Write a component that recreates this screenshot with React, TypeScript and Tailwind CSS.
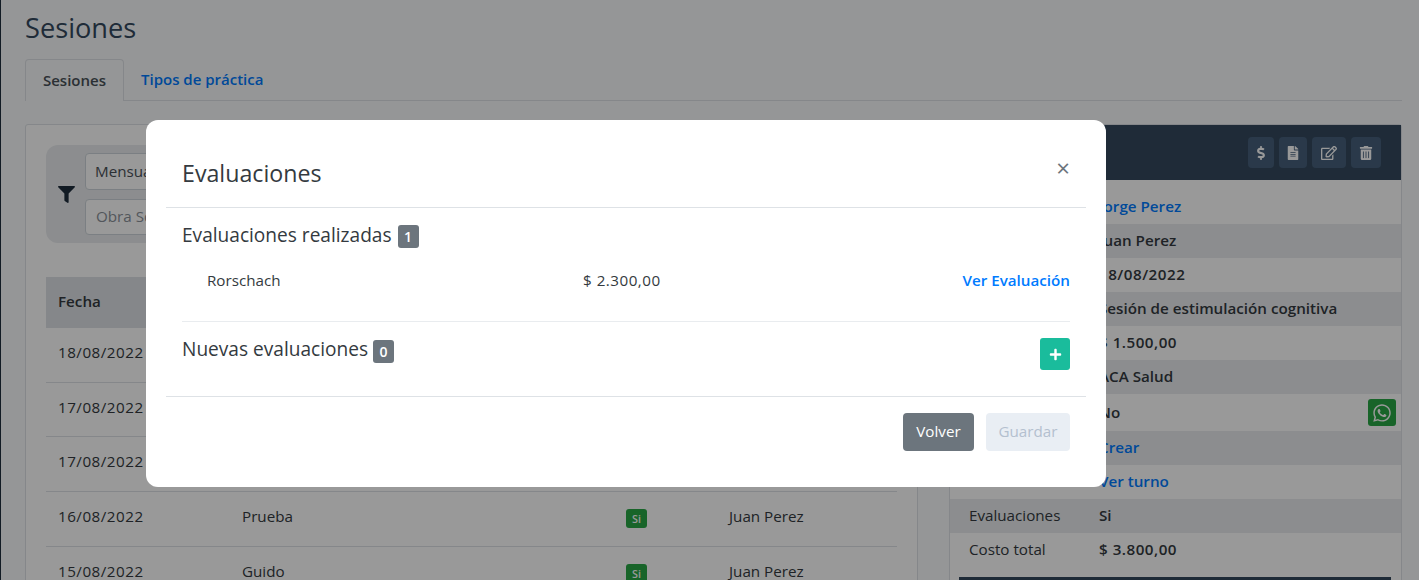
import React from 'react';
import { FaDollarSign, FaFileAlt, FaFilter, FaPlus, FaRegEdit, FaTrashAlt, FaWhatsapp } from 'react-icons/fa';

const sessions = [
  { date: '18/08/2022', name: 'Jorge Perez', paid: 'Si', pro: 'Juan Perez' },
  { date: '17/08/2022', name: 'Guido', paid: 'Si', pro: 'Juan Perez' },
  { date: '17/08/2022', name: 'Prueba', paid: 'Si', pro: 'Juan Perez' },
  { date: '16/08/2022', name: 'Prueba', paid: 'Si', pro: 'Juan Perez' },
  { date: '15/08/2022', name: 'Guido', paid: 'Si', pro: 'Juan Perez' },
];

const details = [
  { label: 'Paciente', value: 'Jorge Perez', link: true },
  { label: 'Profesional', value: 'Juan Perez' },
  { label: 'Fecha', value: '18/08/2022', numeric: true },
  { label: 'Práctica', value: 'Sesión de estimulación cognitiva' },
  { label: 'Costo', value: '$ 1.500,00', numeric: true },
  { label: 'Obra Social', value: 'ACA Salud' },
  { label: 'Recordatorio', value: 'No', whatsapp: true },
  { label: 'Factura', value: 'Crear', link: true },
  { label: 'Turno', value: 'Ver turno', link: true },
  { label: 'Evaluaciones', value: 'Si' },
  { label: 'Costo total', value: '$ 3.800,00', numeric: true },
];

function SessionsTable() {
  return (
    <div className="mt-[34px] text-[15.2px] text-[#343a40]">
      <div className="flex h-[51px] items-center bg-[#dee2e6] pb-[2px] font-semibold">
        <div className="w-[196px] pl-3">Fecha</div>
        <div className="w-[384px]">Paciente</div>
        <div className="w-[103px]">Pago</div>
        <div>Profesional</div>
      </div>
      {sessions.map((s, i) => (
        <div key={i} className="flex h-[54.67px] items-center border-b border-[#dee2e6] pb-[5px]">
          <div className="w-[196px] pl-3 tracking-[0.5px]">{s.date}</div>
          <div className="w-[384px]">{s.name}</div>
          <div className="w-[103px]">
            <span className="relative top-[1px] rounded-[3px] bg-[#28a745] px-[6px] py-[2px] text-[10.8px] font-semibold text-white">{s.paid}</span>
          </div>
          <div>{s.pro}</div>
        </div>
      ))}
    </div>
  );
}

function DetailPanel() {
  return (
    <div className="w-[453px] shrink-0 self-start rounded-[3px] border border-[#dee2e6] bg-white">
      <div className="flex h-[55px] items-center justify-end gap-[5px] bg-[#34495e] pr-[20px] text-white">
        <button className="flex h-[31px] w-[26px] items-center justify-center rounded-[4px] bg-[#46607c]"><FaDollarSign size={14} /></button>
        <button className="flex h-[31px] w-[28px] items-center justify-center rounded-[4px] bg-[#46607c]"><FaFileAlt size={14} /></button>
        <button className="flex h-[31px] w-[34px] items-center justify-center rounded-[4px] bg-[#46607c]"><FaRegEdit size={16} /></button>
        <button className="flex h-[31px] w-[30px] items-center justify-center rounded-[4px] bg-[#46607c]"><FaTrashAlt size={14} /></button>
      </div>
      <div className="pt-[10px] text-[15.2px] text-[#343a40]">
        {details.map((d, i) => (
          <div
            key={d.label}
            className={`flex items-center pl-[19px] ${d.whatsapp ? 'h-[37px]' : 'h-[34px] pb-[2px]'} ${i % 2 === 1 ? 'bg-[#e9ecef]' : ''}`}
          >
            <div className="w-[130px]">{d.label}</div>
            <div className={`flex-1 font-semibold ${d.link ? 'text-[#007bff]' : ''} ${d.numeric ? 'tracking-[0.5px]' : ''}`}>{d.value}</div>
            {d.whatsapp && (
              <button className="mr-[5px] flex h-[27px] w-[28px] items-center justify-center rounded-[3px] bg-[#28a745] text-white">
                <FaWhatsapp size={20} />
              </button>
            )}
          </div>
        ))}
        <div className="mr-[10px] ml-[9px] mt-[10px] h-[40px] bg-[#34495e]" />
      </div>
    </div>
  );
}

function EvaluationsModal() {
  return (
    <div className="fixed inset-0 bg-black/40 pt-[120px] pl-[146px]">
      <div className="h-[367px] w-[960px] rounded-[12px] bg-white px-5 text-[#343a40]">
        <div className="flex h-[88px] items-start justify-between border-b border-[#dee2e6] px-4 pt-[36px]">
          <h5 className="text-[23.2px] leading-[34px] text-[#343a40]">Evaluaciones</h5>
          <button className="mt-[-5px] text-[24px] leading-[34px] text-[#6c757d]">×</button>
        </div>
        <div className="h-[189px] border-b border-[#dee2e6] px-4">
          <div className="flex h-[114px] flex-col border-b border-[#e9ecef]">
            <div className="mt-[14px] flex h-[26px] items-center gap-[6px] text-[19.1px]">
              <span>Evaluaciones realizadas</span>
              <span className="relative top-[1px] flex h-[23px] w-[21px] items-center justify-center rounded-[3px] bg-[#6c757d] text-[14px] font-semibold text-white">1</span>
            </div>
            <div className="mt-[21px] flex items-center text-[15.2px]">
              <span className="w-[401px] pl-[25px]">Rorschach</span>
              <span className="flex-1 tracking-[0.5px]">$ 2.300,00</span>
              <a className="font-semibold text-[#007bff]">Ver Evaluación</a>
            </div>
          </div>
          <div className="flex items-start justify-between pt-4">
            <div className="mt-[-2px] flex h-[26px] items-center gap-[5px] text-[19.1px]">
              <span>Nuevas evaluaciones</span>
              <span className="relative top-[2px] flex h-[23px] w-[21px] items-center justify-center rounded-[3px] bg-[#6c757d] text-[14px] font-semibold text-white">0</span>
            </div>
            <button className="flex h-[32px] w-[30px] items-center justify-center rounded-[3px] bg-[#1abc9c] text-white"><FaPlus size={13} /></button>
          </div>
        </div>
        <div className="flex justify-end gap-3 px-4 pt-4 text-[15.2px]">
          <button className="h-[38px] w-[71px] rounded-[4px] bg-[#6c757d] pb-[1px] text-white">Volver</button>
          <button className="h-[38px] w-[84px] rounded-[4px] bg-[#e9eef4] pb-[1px] text-[#b4c0cf]">Guardar</button>
        </div>
      </div>
    </div>
  );
}

export default function App() {
  return (
    <div className="h-[580px] overflow-hidden border-l border-[#1f2d3d] bg-[#f8fafc] pl-6 pr-[17px] font-['Open_Sans','Noto_Sans',sans-serif]">
      <h1 className="pt-[10px] text-[27.2px] leading-[36px] text-[#34495e]">Sesiones</h1>
      <div className="mt-[13px] flex h-[42px] border-b border-[#dee2e6] text-[15px] font-semibold">
        <div className="flex h-[42px] w-[99px] items-center justify-center rounded-t-[4px] border border-b-0 border-[#dee2e6] bg-[#f8fafc] pb-[1px] text-[#495057]">Sesiones</div>
        <div className="flex items-center pl-[17px] text-[#007bff]">Tipos de práctica</div>
      </div>
      <div className="mt-[23px] flex gap-[31px]">
        <div className="h-[470px] flex-1 rounded-[3px] border border-[#dee2e6] bg-white px-5 pt-5">
          <div className="flex h-[98px] items-center gap-[10px] rounded-[12px] bg-[#e9ecef] pl-3">
            <FaFilter size={17} className="text-[#1f2d3d]" />
            <div className="flex w-[300px] flex-col gap-[9px] text-[15.2px]">
              <div className="flex h-[37px] items-center rounded-[4px] border border-[#ced4da] bg-white px-[9px] text-[#495057]">Mensual</div>
              <div className="flex h-[36px] items-center rounded-[4px] border border-[#ced4da] bg-white px-[10px] pb-[1px] text-[#8a9199]">Obra Social</div>
            </div>
          </div>
          <SessionsTable />
        </div>
        <DetailPanel />
      </div>
      <EvaluationsModal />
    </div>
  );
}
